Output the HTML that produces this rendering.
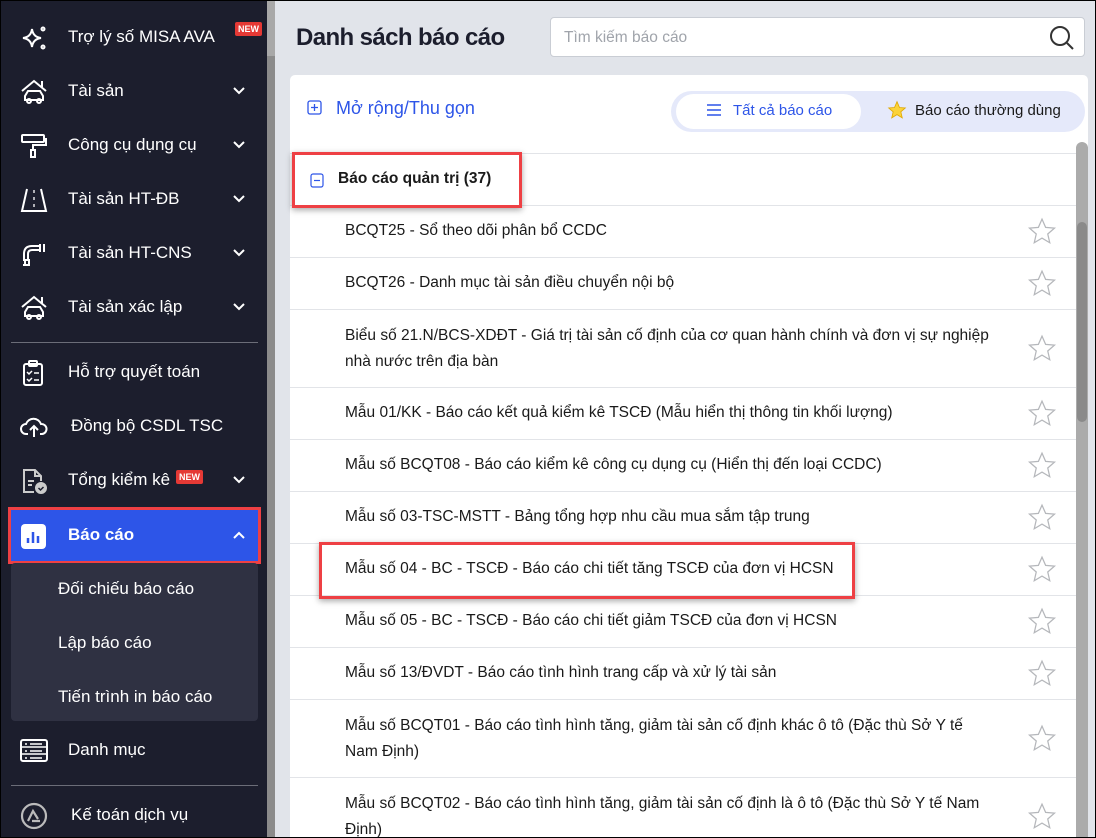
<!DOCTYPE html><html><head><meta charset="utf-8"><style>
*{box-sizing:border-box;margin:0;padding:0}
body{width:1096px;height:838px;overflow:hidden;font-family:"Liberation Sans",sans-serif;background:#000;position:relative}
#frame{position:absolute;left:1px;top:1px;width:1094px;height:836px;background:#e1e4ea;overflow:hidden}
#side{position:absolute;left:0;top:0;width:266px;height:836px;background:#1c1e2d;color:#fff}
#sb{position:absolute;left:266px;top:0;width:8px;height:836px;background:#8b8b8b}
#sb:before{content:"";position:absolute;left:0;top:0;width:8px;height:55px;background:#a8a8a8}
.it{position:absolute;left:0;width:266px;height:54px;font-size:17px;display:flex;align-items:center}
.it .ic{position:absolute;left:19px;top:14px;width:28px;height:28px}
.it .tx{position:absolute;left:67px}
.chev{position:absolute;left:231px;width:14px;height:14px}
.new{display:inline-block;background:#e53935;color:#fff;font-size:9px;font-weight:bold;padding:2px 3px;border-radius:2px;vertical-align:top;margin-left:6px}
.div{position:absolute;left:10px;width:247px;height:1px;background:#6b6d78}
.sub{position:absolute;left:10px;top:562px;width:247px;height:158px;background:#2f3142;border-radius:4px}
.sub div{position:absolute;left:47px;font-size:17px;color:#fff}
h1{position:absolute;left:295px;top:23px;font-size:24px;color:#1c1e2d;font-weight:bold;letter-spacing:-0.6px}
#search{position:absolute;left:549px;top:16px;width:535px;height:40px;background:#fff;border:1px solid #c9cdd4;border-radius:4px}
#search span{position:absolute;left:13px;top:11px;font-size:15.5px;color:#a0a4ab}
#card{position:absolute;left:289px;top:74px;width:798px;height:770px;background:#fff;border-radius:5px;overflow:hidden}
.row{position:absolute;left:0;width:786px;border-top:1px solid #e2e4e8;font-size:15.5px;color:#1a1a1a;line-height:26px}
.row .t{position:absolute;left:55px;width:690px;white-space:nowrap}
.star{position:absolute;left:737px;width:30px;height:30px}
#track{position:absolute;left:786px;top:67px;width:12px;height:710px;background:#ababab;border-radius:6px 6px 0 0}
#thumb{position:absolute;left:787px;top:147px;width:10px;height:200px;background:#8a8a8a;border-radius:5px}
.red{position:absolute;border:3px solid #ee4044;box-shadow:0 2px 6px rgba(0,0,0,.35)}
</style></head><body><div id="frame">
<div id="side">
<div class="it" style="top:9px"><svg class="ic" viewBox="0 0 28 28" fill="none" stroke="#fff" stroke-width="2"><path d="M12 5 Q13 13 21 14 Q13 15 12 23 Q11 15 3 14 Q11 13 12 5Z"/><circle cx="23" cy="5" r="1.5"/><circle cx="23" cy="23" r="1.5"/></svg><span class="tx">Trợ lý số MISA AVA</span><span class="new" style="position:absolute;left:228px;top:12px">NEW</span></div>
<div class="it" style="top:63px"><svg class="ic" viewBox="0 0 28 28" fill="none" stroke="#fff" stroke-width="2"><path d="M2 13 L14 3 L26 13 M22 3v6"/><path d="M5 22 v-4 l3-5 h12 l3 5 v4 z"/><circle cx="9" cy="23" r="2"/><circle cx="19" cy="23" r="2"/></svg><span class="tx">Tài sản</span><svg class="chev" style="top:20px" viewBox="0 0 14 14"><path d="M2 4l5 5 5-5" stroke="#fff" stroke-width="2" fill="none"/></svg></div>
<div class="it" style="top:117px"><svg class="ic" viewBox="0 0 28 28" fill="none" stroke="#fff" stroke-width="2"><rect x="2" y="3" width="22" height="7" rx="1"/><path d="M24 7h2v6H13v5"/><rect x="11" y="18" width="4" height="7"/></svg><span class="tx">Công cụ dụng cụ</span><svg class="chev" style="top:20px" viewBox="0 0 14 14"><path d="M2 4l5 5 5-5" stroke="#fff" stroke-width="2" fill="none"/></svg></div>
<div class="it" style="top:171px"><svg class="ic" viewBox="0 0 28 28" fill="none" stroke="#fff" stroke-width="2"><path d="M7 3 L2 25 H26 L21 3"/><path d="M14 4v3M14 11v3M14 18v3" stroke-width="1.3"/></svg><span class="tx">Tài sản HT-ĐB</span><svg class="chev" style="top:20px" viewBox="0 0 14 14"><path d="M2 4l5 5 5-5" stroke="#fff" stroke-width="2" fill="none"/></svg></div>
<div class="it" style="top:225px"><svg class="ic" viewBox="0 0 28 28" fill="none" stroke="#fff" stroke-width="2"><path d="M4 20 V14 Q4 6 12 6 H20 M8 20 V14 Q8 10 12 10 H20 M20 4v8 M24 4v8 M3 20h7 M3 25h7 M5 20v5M9 20v5"/></svg><span class="tx">Tài sản HT-CNS</span><svg class="chev" style="top:20px" viewBox="0 0 14 14"><path d="M2 4l5 5 5-5" stroke="#fff" stroke-width="2" fill="none"/></svg></div>
<div class="it" style="top:279px"><svg class="ic" viewBox="0 0 28 28" fill="none" stroke="#fff" stroke-width="2"><path d="M2 13 L14 3 L26 13 M22 3v6"/><path d="M5 22 v-4 l3-5 h12 l3 5 v4 z"/><circle cx="9" cy="23" r="2"/><circle cx="19" cy="23" r="2"/></svg><span class="tx">Tài sản xác lập</span><svg class="chev" style="top:20px" viewBox="0 0 14 14"><path d="M2 4l5 5 5-5" stroke="#fff" stroke-width="2" fill="none"/></svg></div>
<div class="div" style="top:341px"></div>
<div class="it" style="top:344px"><svg class="ic" viewBox="0 0 28 28" fill="none" stroke="#fff" stroke-width="2"><rect x="4" y="5" width="18" height="21" rx="2"/><rect x="9" y="2" width="8" height="5" rx="1"/><path d="M7 13l2 2 3-3M7 20l2 2 3-3M14 14h5M14 21h5" stroke-width="1.5"/></svg><span class="tx">Hỗ trợ quyết toán</span></div>
<div class="it" style="top:398px"><svg class="ic" viewBox="0 0 28 28" fill="none" stroke="#fff" stroke-width="2"><path d="M8 21 H6 a5 5 0 0 1 0-10 a8 8 0 0 1 15 0 a5 5 0 0 1 1 10 h-2"/><path d="M14 24 v-10 M10 17l4-4 4 4"/></svg><span class="tx" style="left:70px">Đồng bộ CSDL TSC</span></div>
<div class="it" style="top:452px"><svg class="ic" viewBox="0 0 28 28" fill="none" stroke="#ccc" stroke-width="2"><path d="M14 25 H4 V3 H15 L21 9 V14 M15 3v6h6"/><path d="M8 14h6M8 18h4"/><circle cx="21" cy="21" r="5" fill="#ccc"/><path d="M18.5 21l2 2 3-3" stroke="#1c1e2d" stroke-width="1.5"/></svg><span class="tx">Tổng kiểm kê<span class="new">NEW</span></span><svg class="chev" style="top:20px" viewBox="0 0 14 14"><path d="M2 4l5 5 5-5" stroke="#fff" stroke-width="2" fill="none"/></svg></div>
<div style="position:absolute;left:10px;top:509px;width:247px;height:51px;background:#2d55e8"></div>
<div class="red" style="left:7px;top:506px;width:253px;height:57px;box-shadow:none"></div>
<div class="it" style="top:507px;font-weight:bold"><svg class="ic" viewBox="0 0 28 28"><rect x="1" y="2" width="25" height="25" rx="4" fill="#fff"/><path d="M8 16v5M13 10v11M18 14v7" stroke="#2d55e8" stroke-width="2.5"/></svg><span class="tx">Báo cáo</span><svg class="chev" style="top:20px" viewBox="0 0 14 14"><path d="M2 10l5-5 5 5" stroke="#fff" stroke-width="2" fill="none"/></svg></div>
<div class="sub"><div style="top:16px">Đối chiếu báo cáo</div><div style="top:70px">Lập báo cáo</div><div style="top:124px">Tiến trình in báo cáo</div></div>
<div class="it" style="top:722px"><svg class="ic" viewBox="0 0 28 28" fill="none" stroke="#fff" stroke-width="2"><rect x="1" y="3" width="26" height="21" rx="2"/><path d="M1 10h26M1 17h26M5 7h2M5 14h2M5 21h2M10 7h12M10 14h12M10 21h12" stroke-width="1.5"/></svg><span class="tx">Danh mục</span></div>
<div class="div" style="top:784px"></div>
<div class="it" style="top:787px"><svg class="ic" viewBox="0 0 28 28" fill="none" stroke="#bbb" stroke-width="2.2"><circle cx="14" cy="14" r="12"/><path d="M8 19 L13 9 L18 17 M12 19 h8"/></svg><span class="tx" style="left:70px">Kế toán dịch vụ</span></div>
</div>
<div id="sb"></div>
<h1>Danh sách báo cáo</h1>
<div id="search"><span>Tìm kiếm báo cáo</span><svg style="position:absolute;right:9px;top:7px" width="26" height="26" viewBox="0 0 26 26" fill="none" stroke="#333" stroke-width="2"><circle cx="11" cy="11" r="9"/><path d="M18 18l6 6"/></svg></div>
<div id="card">
<svg style="position:absolute;left:17px;top:25px" width="15" height="15" viewBox="0 0 15 15" fill="none" stroke="#2d55e8" stroke-width="1.3"><rect x="1" y="1" width="13" height="13" rx="2"/><path d="M7.5 4v7M4 7.5h7"/></svg>
<div style="position:absolute;left:46px;top:23px;font-size:18px;color:#2d55e8">Mở rộng/Thu gọn</div>
<div style="position:absolute;left:381px;top:16px;width:414px;height:41px;background:#e5e9fa;border-radius:21px"></div>
<div style="position:absolute;left:386px;top:19px;width:185px;height:35px;background:#fff;border-radius:18px"></div>
<svg style="position:absolute;left:416px;top:28px" width="16" height="14" viewBox="0 0 16 14" stroke="#2d55e8" stroke-width="1.5"><path d="M1 2h14M1 7h14M1 12h14"/></svg>
<div style="position:absolute;left:443px;top:27px;font-size:15px;color:#2d55e8">Tất cả báo cáo</div>
<svg style="position:absolute;left:597px;top:25px" width="20" height="20" viewBox="0 0 24 24"><path d="M12 2l3 7 7 .6-5.4 4.6 1.7 7.3L12 17.6 5.7 21.5l1.7-7.3L2 9.6 9 9z" fill="#fbd33a" stroke="#e0a800" stroke-width="1"/></svg>
<div style="position:absolute;left:625px;top:27px;font-size:15px;color:#1a1a1a">Báo cáo thường dùng</div>
<div class="row" style="top:78px;height:52px"><svg style="position:absolute;left:20px;top:19px" width="14" height="15" viewBox="0 0 14 15" fill="none" stroke="#2d55e8" stroke-width="1.2"><rect x="1" y="1" width="12" height="13" rx="2"/><path d="M4 7.5h6"/></svg><span style="position:absolute;left:48px;top:12px;font-weight:bold">Báo cáo quản trị (37)</span></div>
<div id="rows"></div>
<div id="track"></div><div id="thumb"></div>
</div>
<div class="red" style="left:291px;top:151px;width:230px;height:56px"></div>
<div class="red" style="left:318px;top:541px;width:536px;height:57px"></div>
</div>
<script>
var d=[["BCQT25 - Sổ theo dõi phân bổ CCDC",1],["BCQT26 - Danh mục tài sản điều chuyển nội bộ",1],["Biểu số 21.N/BCS-XDĐT - Giá trị tài sản cố định của cơ quan hành chính và đơn vị sự nghiệp<br>nhà nước trên địa bàn",2],["Mẫu 01/KK - Báo cáo kết quả kiểm kê TSCĐ (Mẫu hiển thị thông tin khối lượng)",1],["Mẫu số BCQT08 - Báo cáo kiểm kê công cụ dụng cụ (Hiển thị đến loại CCDC)",1],["Mẫu số 03-TSC-MSTT - Bảng tổng hợp nhu cầu mua sắm tập trung",1],["Mẫu số 04 - BC - TSCĐ - Báo cáo chi tiết tăng TSCĐ của đơn vị HCSN",1],["Mẫu số 05 - BC - TSCĐ - Báo cáo chi tiết giảm TSCĐ của đơn vị HCSN",1],["Mẫu số 13/ĐVDT - Báo cáo tình hình trang cấp và xử lý tài sản",1],["Mẫu số BCQT01 - Báo cáo tình hình tăng, giảm tài sản cố định khác ô tô (Đặc thù Sở Y tế<br>Nam Định)",2],["Mẫu số BCQT02 - Báo cáo tình hình tăng, giảm tài sản cố định là ô tô (Đặc thù Sở Y tế Nam<br>Định)",2]];
var y=130,h="";d.forEach(function(r){var H=r[1]==1?52:78;h+='<div class="row" style="top:'+y+'px;height:'+H+'px"><div class="t" style="top:'+(r[1]==1?12:13)+'px">'+r[0]+'</div><svg class="star" style="top:'+(H/2-16)+'px" viewBox="0 0 24 24"><path d="M12 2.5l2.9 6.6 7.1.6-5.4 4.7 1.6 7-6.2-3.7-6.2 3.7 1.6-7L2 9.7l7.1-.6z" fill="none" stroke="#b5b7bb" stroke-width="1"/></svg></div>';y+=H;});
document.getElementById('rows').outerHTML=h;
</script>
</body></html>
